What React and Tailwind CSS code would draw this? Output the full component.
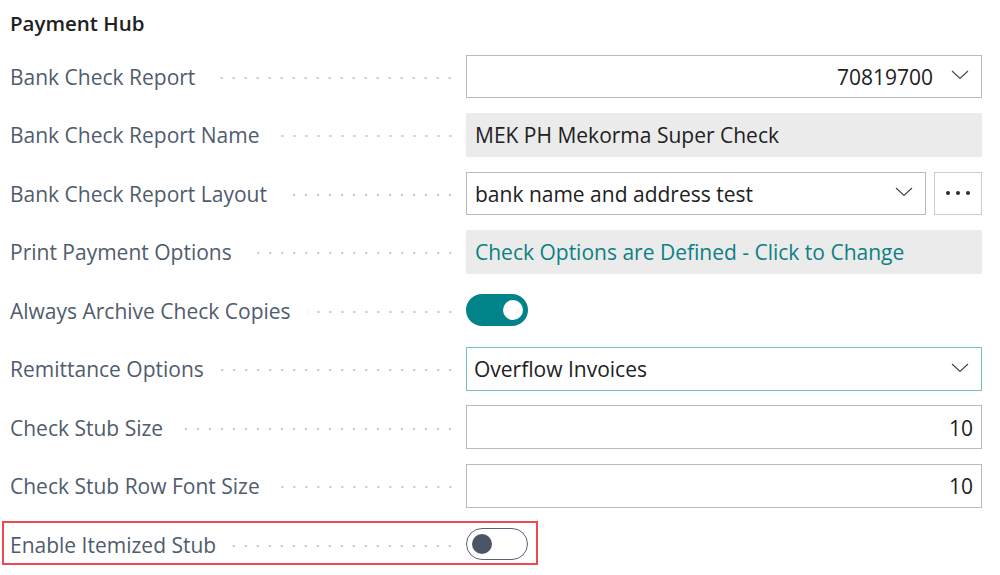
import React from "react";

const Chevron = () => (
  <svg width="18" height="10" viewBox="0 0 18 10" fill="none" className="shrink-0 -mt-[2px]">
    <polyline points="1,1 9,8.5 17,1" stroke="#444" strokeWidth="1.1" />
  </svg>
);

const Toggle = ({ on }) =>
  on ? (
    <div className="w-[62px] h-[32px] rounded-full bg-[#00848a] flex items-center justify-end pr-[5px]">
      <div className="w-[20px] h-[20px] rounded-full bg-white" />
    </div>
  ) : (
    <div className="w-[62px] h-[32px] rounded-full border-[1.5px] border-[#5b6472] bg-white flex items-center pl-[5px]">
      <div className="w-[20px] h-[20px] rounded-full bg-[#4c5566]" />
    </div>
  );

const Field = ({ label, children, highlight }) => (
  <div className="relative grid grid-cols-[456px_1fr] h-[44px] items-center">
    {highlight && (
      <div className="absolute left-[-8px] top-[-1px] w-[536px] h-[44px] border-2 border-[#ea4a50] pointer-events-none" />
    )}
    <div className="flex items-center pr-[10px] min-w-0">
      <span className="whitespace-nowrap text-[#505c6d] pt-[3px]">{label}</span>
      <div className="flex-1 ml-[16px] mt-[3px] h-[6px] bg-[radial-gradient(circle,#c4c7cb_1px,transparent_1.6px)] bg-[length:12px_6px] bg-repeat-x bg-right" />
    </div>
    <div className="flex items-center h-full min-w-0">{children}</div>
  </div>
);

export default function App() {
  return (
    <div className="w-[1000px] h-[575px] bg-white overflow-hidden pl-[10px] pr-[18px] pt-[10px] font-['Open_Sans','Noto_Sans',sans-serif] text-[21px]">
      <h2 className="text-[20.5px] leading-[26px] font-semibold text-[#212121]">Payment Hub</h2>

      <div className="mt-[18px] flex flex-col gap-[14.5px]">
        <Field label="Bank Check Report">
          <div className="w-full h-[43px] border border-[#b7bbc0] flex items-center justify-end pr-[12px] gap-[18px] text-[#212121]">
            <span className="pt-[3px]">70819700</span>
            <Chevron />
          </div>
        </Field>

        <Field label="Bank Check Report Name">
          <div className="w-full h-[44px] bg-[#ebebec] flex items-center pl-[9px] pt-[3px] text-[#212121]">
            MEK PH Mekorma Super Check
          </div>
        </Field>

        <Field label="Bank Check Report Layout">
          <div className="w-full flex items-center gap-[8px]">
            <div className="flex-1 h-[43px] border border-[#b7bbc0] flex items-center justify-between pl-[8px] pr-[12px] text-[#212121]">
              <span className="pt-[3px]">bank name and address test</span>
              <Chevron />
            </div>
            <button className="w-[48px] h-[43px] border border-[#c9ccd0] flex items-center justify-center gap-[6.5px]">
              <span className="w-[3.5px] h-[3.5px] rounded-full bg-[#2b2b2b]" />
              <span className="w-[3.5px] h-[3.5px] rounded-full bg-[#2b2b2b]" />
              <span className="w-[3.5px] h-[3.5px] rounded-full bg-[#2b2b2b]" />
            </button>
          </div>
        </Field>

        <Field label="Print Payment Options">
          <div className="w-full h-[44px] bg-[#ebebec] flex items-center pl-[9px] pt-[3px] text-[#0b8183]">
            Check Options are Defined - Click to Change
          </div>
        </Field>

        <Field label="Always Archive Check Copies">
          <Toggle on />
        </Field>

        <Field label="Remittance Options">
          <div className="w-full h-[44px] border border-[#72c0c1] flex items-center justify-between pl-[7px] pr-[12px] text-[#212121]">
            <span className="pt-[3px]">Overflow Invoices</span>
            <Chevron />
          </div>
        </Field>

        <Field label="Check Stub Size">
          <div className="w-full h-[44px] border border-[#b7bbc0] flex items-center justify-end pr-[8px] pt-[3px] text-[#212121]">
            10
          </div>
        </Field>

        <Field label="Check Stub Row Font Size">
          <div className="w-full h-[44px] border border-[#b7bbc0] flex items-center justify-end pr-[8px] pt-[3px] text-[#212121]">
            10
          </div>
        </Field>

        <Field label="Enable Itemized Stub" highlight>
          <Toggle />
        </Field>
      </div>
    </div>
  );
}
